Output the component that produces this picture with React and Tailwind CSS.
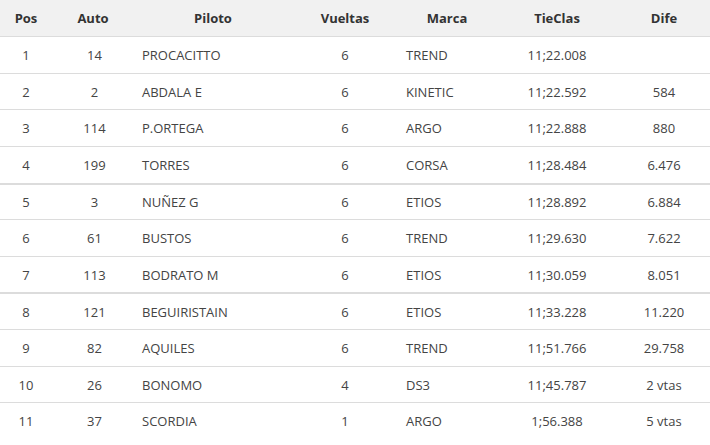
import React from "react";

const rows = [
  ["1", "14", "PROCACITTO", "6", "TREND", "11;22.008", ""],
  ["2", "2", "ABDALA E", "6", "KINETIC", "11;22.592", "584"],
  ["3", "114", "P.ORTEGA", "6", "ARGO", "11;22.888", "880"],
  ["4", "199", "TORRES", "6", "CORSA", "11;28.484", "6.476"],
  ["5", "3", "NUÑEZ G", "6", "ETIOS", "11;28.892", "6.884"],
  ["6", "61", "BUSTOS", "6", "TREND", "11;29.630", "7.622"],
  ["7", "113", "BODRATO M", "6", "ETIOS", "11;30.059", "8.051"],
  ["8", "121", "BEGUIRISTAIN", "6", "ETIOS", "11;33.228", "11.220"],
  ["9", "82", "AQUILES", "6", "TREND", "11;51.766", "29.758"],
  ["10", "26", "BONOMO", "4", "DS3", "11;45.787", "2 vtas"],
  ["11", "37", "SCORDIA", "1", "ARGO", "1;56.388", "5 vtas"],
];

const cols = "grid grid-cols-[52px_82px_158px_106px_98px_122px_92px]";

export default function App() {
  return (
    <div
      className="w-[710px] h-[445px] bg-white text-[13px] text-[#444]"
      style={{ fontFamily: '"Open Sans", "Liberation Sans", sans-serif' }}
    >
      <div className={`${cols} h-[36px] pt-[2px] bg-[#f1f1f1] items-center font-bold text-[#333]`}>
        <div className="text-center">Pos</div>
        <div className="text-center">Auto</div>
        <div className="text-center">Piloto</div>
        <div className="text-center">Vueltas</div>
        <div className="text-center">Marca</div>
        <div className="text-center">TieClas</div>
        <div className="text-center">Dife</div>
      </div>
      {rows.map((r, i) => (
        <div
          key={i}
          className={`${cols} h-[36.65px] pt-[2px] ${
            i === 4 || i === 7 ? "border-t-2" : "border-t"
          } border-[#dcdcdc] items-center`}
        >
          <div className="text-center">{r[0]}</div>
          <div className="text-center pl-[3px]">{r[1]}</div>
          <div className="pl-2">{r[2]}</div>
          <div className="text-center">{r[3]}</div>
          <div className="pl-2">{r[4]}</div>
          <div className="text-center">{r[5]}</div>
          <div className="text-center">{r[6]}</div>
        </div>
      ))}
    </div>
  );
}
